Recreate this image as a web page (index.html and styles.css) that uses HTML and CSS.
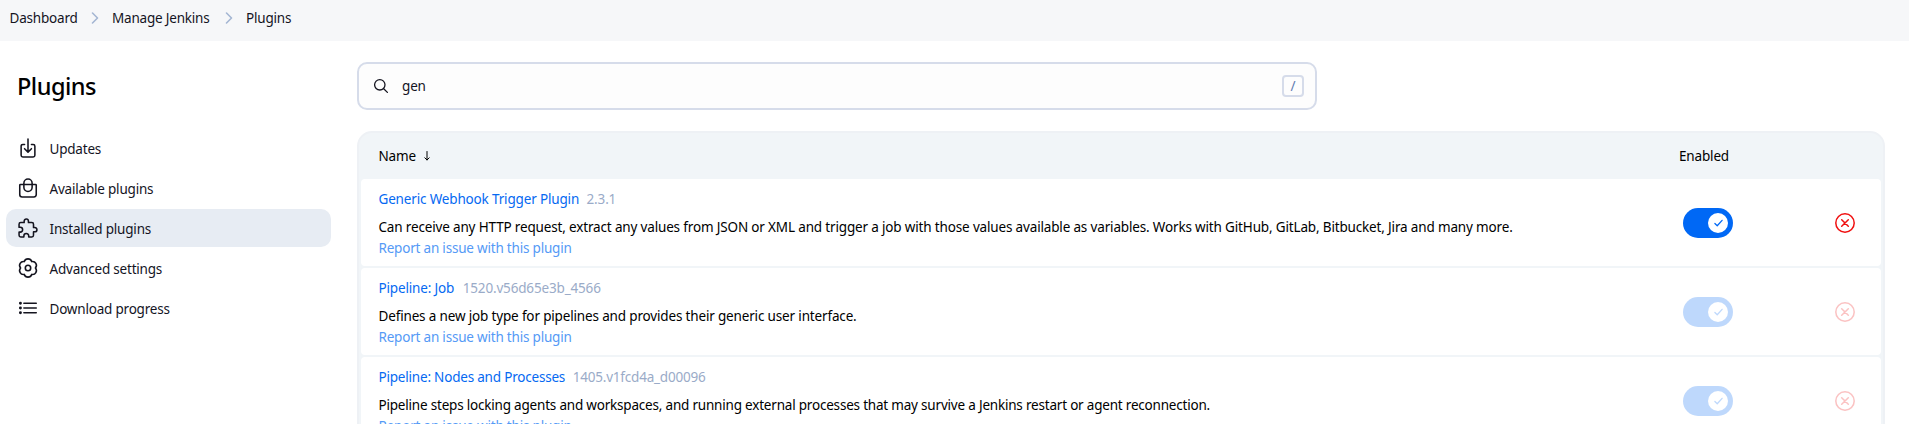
FILE: index.html
```html
<!DOCTYPE html>
<html lang="en">
<head>
<meta charset="utf-8">
<title>Plugins</title>
<link rel="stylesheet" href="styles.css">
</head>
<body>
<nav class="breadcrumbs">
  <span class="crumb-dashboard">Dashboard</span>
  <svg class="chevron" viewBox="0 0 8 12"><path d="M1.5 1l5 5-5 5"/></svg>
  <span class="crumb-manage">Manage Jenkins</span>
  <svg class="chevron" viewBox="0 0 8 12"><path d="M1.5 1l5 5-5 5"/></svg>
  <span class="crumb-plugins">Plugins</span>
</nav>
<div class="page">
  <aside class="sidebar">
    <h1>Plugins</h1>
    <ul class="tasks">
      <li class="task">
        <svg class="icon" viewBox="0 0 512 512"><path d="M336 176h40a40 40 0 0140 40v208a40 40 0 01-40 40H136a40 40 0 01-40-40V216a40 40 0 0140-40h40"/><path d="M176 272l80 80 80-80M256 48v288"/></svg>
        <span>Updates</span>
      </li>
      <li class="task">
        <svg class="icon" viewBox="0 0 512 512"><path d="M80 176a16 16 0 00-16 16v216c0 30.24 25.76 56 56 56h272c30.24 0 56-24.51 56-54.75V192a16 16 0 00-16-16zM160 176v-32a96 96 0 0196-96h0a96 96 0 0196 96v32"/><path d="M160 176v64a96 96 0 0096 96h0a96 96 0 0096-96v-64"/></svg>
        <span>Available plugins</span>
      </li>
      <li class="task task-active">
        <svg class="icon" viewBox="0 0 512 512"><path d="M413.66 246.1H386a2 2 0 01-2-2v-77.24A38.86 38.86 0 00345.14 128H267.9a2 2 0 01-2-2V98.34c0-27.14-21.5-49.86-48.64-50.33a49.53 49.53 0 00-50.4 49.51V126a2 2 0 01-2 2H87.62A39.74 39.74 0 0048 167.62V238a2 2 0 002 2h26.91c29.37 0 53.68 25.48 54.09 54.85.42 29.87-23.51 57.15-53.29 57.15H50a2 2 0 00-2 2v70.38A39.74 39.74 0 0087.62 464H158a2 2 0 002-2v-20.93c0-30.28 24.75-56.35 55-57.06 30.1-.7 57 20.31 57 50.28V462a2 2 0 002 2h71.14A38.86 38.86 0 00384 425.14v-78a2 2 0 012-2h28.48c27.63 0 49.52-22.67 49.52-50.4s-23.2-48.64-50.34-48.64z"/></svg>
        <span>Installed plugins</span>
      </li>
      <li class="task">
        <svg class="icon" viewBox="-1 -1 22 22"><g class="gear"><path d="M17.400 10A3.900 3.900 0 0113.700 16.410A3.900 3.900 0 016.300 16.410A3.900 3.900 0 012.600 10A3.900 3.900 0 016.300 3.590A3.900 3.900 0 0113.700 3.590A3.900 3.900 0 0117.400 10z"/><circle cx="10" cy="10" r="2.700"/></g></svg>
        <span>Advanced settings</span>
      </li>
      <li class="task">
        <svg class="icon" viewBox="0 0 512 512"><path d="M160 144h288M160 256h288M160 368h288"/><g class="dots"><circle cx="80" cy="144" r="16"/><circle cx="80" cy="256" r="16"/><circle cx="80" cy="368" r="16"/></g></svg>
        <span>Download progress</span>
      </li>
    </ul>
  </aside>
  <main class="main">
    <div class="search">
      <svg class="search-icon" viewBox="0 0 14 14"><circle cx="5.800" cy="5.800" r="5.200"/><path d="M9.700 9.700l3.700 3.700"/></svg>
      <span class="search-text">gen</span>
      <kbd>/</kbd>
    </div>
    <section class="table">
      <header class="table-head">
        <div class="col-name"><span>Name</span><svg class="arrow" viewBox="0 0 6 10"><path d="M3 .5v8.500M.8 6.800L3 9l2.200-2.200"/></svg></div>
        <div class="col-enabled">Enabled</div>
      </header>
      <article class="row">
        <div class="info">
          <div class="heading"><a>Generic Webhook Trigger Plugin</a><span class="version">2.3.1</span></div>
          <p>Can receive any HTTP request, extract any values from JSON or XML and trigger a job with those values available as variables. Works with GitHub, GitLab, Bitbucket, Jira and many more.</p>
          <a class="report">Report an issue with this plugin</a>
        </div>
        <div class="toggle"><span class="knob"><svg viewBox="0 0 10 8"><path d="M1 4.600l2.600 2.500L9 1"/></svg></span></div>
        <svg class="remove" viewBox="0 0 20 20"><circle cx="10" cy="10" r="9.200"/><path d="M6.700 6.700l6.600 6.600M13.300 6.700l-6.600 6.600"/></svg>
      </article>
      <article class="row row-locked">
        <div class="info">
          <div class="heading heading-loose"><a>Pipeline: Job</a><span class="version">1520.v56d65e3b_4566</span></div>
          <p>Defines a new job type for pipelines and provides their generic user interface.</p>
          <a class="report">Report an issue with this plugin</a>
        </div>
        <div class="toggle"><span class="knob"><svg viewBox="0 0 10 8"><path d="M1 4.600l2.600 2.500L9 1"/></svg></span></div>
        <svg class="remove" viewBox="0 0 20 20"><circle cx="10" cy="10" r="9.200"/><path d="M6.700 6.700l6.600 6.600M13.300 6.700l-6.600 6.600"/></svg>
      </article>
      <article class="row row-locked">
        <div class="info info-dense">
          <div class="heading"><a>Pipeline: Nodes and Processes</a><span class="version">1405.v1fcd4a_d00096</span></div>
          <p>Pipeline steps locking agents and workspaces, and running external processes that may survive a Jenkins restart or agent reconnection.</p>
          <a class="report">Report an issue with this plugin</a>
        </div>
        <div class="toggle"><span class="knob"><svg viewBox="0 0 10 8"><path d="M1 4.600l2.600 2.500L9 1"/></svg></span></div>
        <svg class="remove" viewBox="0 0 20 20"><circle cx="10" cy="10" r="9.200"/><path d="M6.700 6.700l6.600 6.600M13.300 6.700l-6.600 6.600"/></svg>
      </article>
    </section>
  </main>
</div>
</body>
</html>
```
FILE: styles.css
```css
* { box-sizing: border-box; }
body {
  margin: 0;
  height: 424px;
  overflow: hidden;
  background: #fff;
  color: #14141f;
  font: 13.5px/20px "Segoe UI", "Noto Sans", "Open Sans", sans-serif;
  letter-spacing: -0.16px;
  white-space: nowrap;
}
svg { display: block; flex: none; fill: none; stroke: currentColor; stroke-linecap: round; stroke-linejoin: round; overflow: visible; }
.breadcrumbs { display: flex; height: 41px; padding: 8px 9.500px 13px; background: #f6f7f9; letter-spacing: -0.2px; }
.breadcrumbs span { flex: none; }
.crumb-dashboard { width: 81.500px; }
.crumb-manage { width: 113px; }
.chevron { width: 8px; height: 12px; margin: 4px 13px 0 0; stroke: #a4b6d3; stroke-width: 1.6; }
.page { display: flex; gap: 26px; }
.sidebar { flex: none; width: 331px; padding: 29px 0 0 6px; }
h1 { margin: 0 0 27px; padding-left: 11px; font-size: 23.5px; line-height: 32px; font-weight: 500; color: #000; letter-spacing: -0.5px; }
.tasks { display: flex; flex-direction: column; gap: 2px; margin: 0; padding: 0; list-style: none; letter-spacing: -0.2px; }
.task { display: flex; align-items: center; gap: 10.500px; height: 38px; padding: 0 11px; border-radius: 10px; }
.task span { padding-top: 2px; }
.task-active { background: #e7ecf3; }
.icon { width: 22px; height: 22px; stroke-width: 36; }
.gear { stroke-width: 1.600; }
.dots { fill: currentColor; }
.main { flex: none; width: 1528px; padding-top: 21px; }
.search { display: flex; align-items: center; width: 960px; height: 48px; padding: 0 11px 0 15px; border: 2px solid #d6dcea; border-radius: 10px; background: #fdfdfd; }
.search-icon { width: 14px; height: 14px; stroke-width: 1.300; }
.search-text { flex: 1; margin-left: 14px; }
kbd { width: 22px; height: 22px; border: 2px solid #d6dcea; border-radius: 4px; color: #5f7bb0; font: inherit; line-height: 18px; text-align: center; }
.table { display: flex; flex-direction: column; gap: 2px; margin-top: 21px; padding: 2px; border: 2px solid #eef1f5; border-radius: 15px; background: #f1f5f8; }
.table-head { display: flex; height: 42px; padding: 11px 0 0 17.500px; color: #000; }
.col-name { display: flex; width: 1300.500px; }
.arrow { width: 6px; height: 10px; margin: 5px 0 0 8px; }
.row { display: flex; align-items: center; height: 87px; padding-left: 17.500px; border-radius: 4px; background: #fff; }
.info { width: 1304.500px; padding-top: 2px; color: #000; }
.info-dense { letter-spacing: -0.2px; }
.heading { display: flex; gap: 7.500px; height: 28px; }
.heading-loose { gap: 8.500px; }
.heading a { color: #0569f2; }
.version { color: #9aabc8; }
p { margin: 0; height: 21px; }
.report { display: block; color: #559af6; letter-spacing: -0.2px; }
.toggle { width: 50px; height: 30px; padding: 5px; border-radius: 15px; background: #0068f5; color: #0068f5; }
.knob { display: flex; align-items: center; justify-content: center; width: 20px; height: 20px; margin-left: 20px; border-radius: 10px; background: #fff; }
.knob svg { width: 9px; height: 8px; stroke-width: 1.400; }
.remove { width: 20px; height: 20px; margin-left: 102px; color: #f01010; stroke-width: 1.500; }
.row-locked .toggle, .row-locked .remove { opacity: .25; }
```
